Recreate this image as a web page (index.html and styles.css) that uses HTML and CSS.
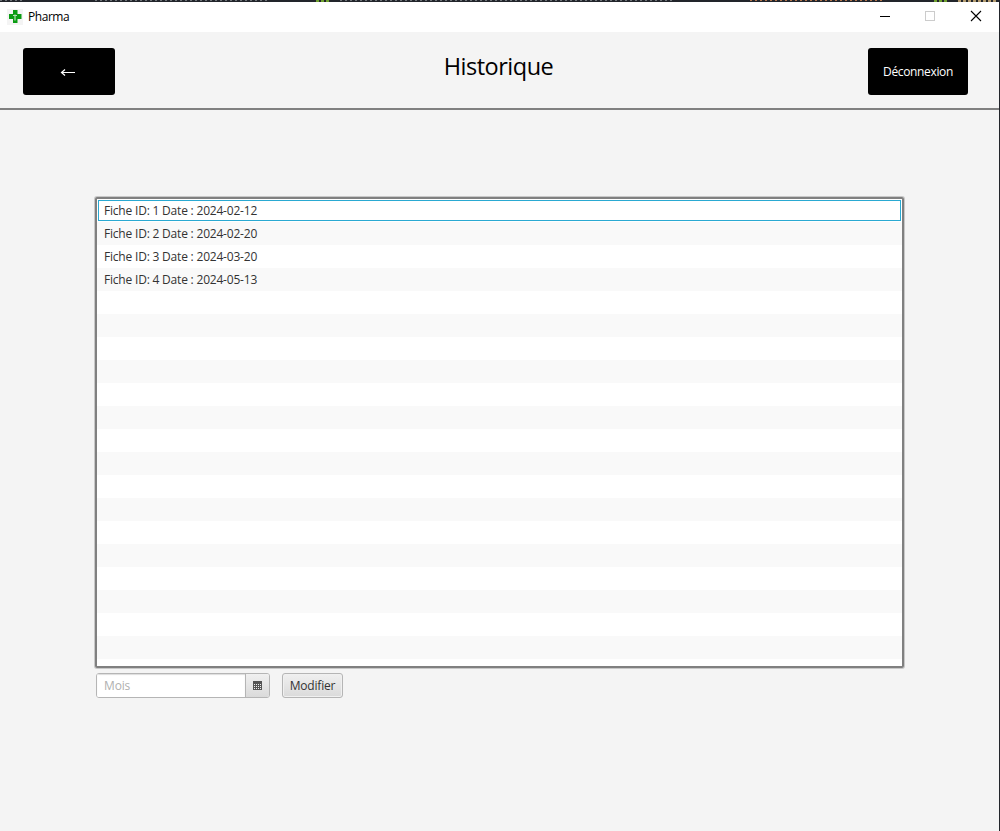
FILE: index.html
```html
<!DOCTYPE html>
<html lang="fr">
<head>
<meta charset="utf-8">
<title>Pharma</title>
<link rel="stylesheet" href="styles.css">
</head>
<body>
<div class="desktop">
<div class="backdrop"></div>
<div class="window">
  <header class="titlebar">
    <svg class="logo" width="16" height="16" viewBox="0 0 16 16"><rect width="16" height="16" fill="#f4f4f4"/><path d="M6 1h4.500v4H14.500v5H10.500v4H6v-4H2V5h4z" fill="#0a9c12"/><path d="M6 6.500h4M8 5.500v6" stroke="#b5e0b5" stroke-width="1.200" fill="none"/></svg>
    <span class="app-name">Pharma</span>
    <div class="controls">
      <svg width="46" height="30" viewBox="0 0 46 30"><path d="M18 14.5h10" stroke="#000"/></svg>
      <svg width="46" height="30" viewBox="0 0 46 30"><rect x="17.5" y="9.5" width="9" height="9" fill="none" stroke="#ccc"/></svg>
      <svg width="46" height="30" viewBox="0 0 46 30"><path d="M17 9l10 10M27 9l-10 10" stroke="#000" stroke-width="1.1"/></svg>
    </div>
  </header>
  <section class="heading">
    <button class="dark back" aria-label="Retour"><svg width="16" height="10" viewBox="0 0 16 10"><path d="M1.500 5.500H15M5 2.500L1.500 5.500L5 8.500" fill="none" stroke="#fff" stroke-width="1.200"/></svg></button>
    <h1><span>Historique</span></h1>
    <button class="dark logout"><span>Déconnexion</span></button>
  </section>
  <main>
    <ul class="list">
      <li class="focused">Fiche ID: 1 Date : 2024-02-12</li>
      <li>Fiche ID: 2 Date : 2024-02-20</li>
      <li>Fiche ID: 3 Date : 2024-03-20</li>
      <li>Fiche ID: 4 Date : 2024-05-13</li>
    </ul>
    <div class="actions">
      <div class="picker"><input placeholder="Mois"><button class="calendar" aria-label="Calendrier"><svg width="9" height="9" viewBox="0 0 9 9" shape-rendering="crispEdges"><path d="M0 0h9v9H0z" fill="#555"/><path d="M1 3.5h7M1 5.5h7M1 7.5h7" stroke="#eee" stroke-dasharray="1 1"/></svg></button></div>
      <button class="modify"><span>Modifier</span></button>
    </div>
  </main>
</div>
</div>
</body>
</html>
```
FILE: styles.css
```css
* { box-sizing: border-box; }
body { margin: 0; font: 12px "Open Sans", "Noto Sans", sans-serif; color: #333; overflow: hidden; }
button { font: inherit; padding: 0; margin: 0; }
.desktop { width: 1000px; height: 831px; background: #22252b; display: flex; flex-direction: column; }
.backdrop { height: 2px; flex: none; background:
  repeating-linear-gradient(90deg, #70757a 0 2px, transparent 2px 5px) 0 0 / 22px 1px no-repeat,
  repeating-linear-gradient(90deg, #70757a 0 2px, transparent 2px 5px) 95px 0 / 172px 1px no-repeat,
  repeating-linear-gradient(90deg, #6fa02f 0 3px, transparent 3px 5px) 316px 0 / 14px 2px no-repeat,
  repeating-linear-gradient(90deg, #70757a 0 2px, transparent 2px 5px) 340px 0 / 335px 1px no-repeat,
  repeating-linear-gradient(90deg, #b3764d 0 2px, transparent 2px 5px) 750px 0 / 134px 1px no-repeat,
  repeating-linear-gradient(90deg, #6fa02f 0 3px, transparent 3px 5px) 934px 0 / 14px 2px no-repeat,
  repeating-linear-gradient(90deg, #b39a6d 0 3px, transparent 3px 5px) 958px 0 / 38px 2px no-repeat; }
.window { width: 999px; flex: 1; background: #f4f4f4; }
.titlebar { height: 30px; background: #fff; display: flex; align-items: center; padding-left: 7px; color: #000; }
.logo { flex: none; margin-bottom: 1px; }
.app-name { margin-left: 5px; line-height: 16px; letter-spacing: -.45px; }
.controls { display: flex; margin-left: auto; margin-right: -1px; }
.heading { height: 78px; border-bottom: 2px solid #808080; display: grid; grid-template-columns: 92px 1fr 100px; padding: 16px 31px 0 23px; }
.dark { background: #000; color: #fff; border: 0; border-radius: 3px; height: 47px; }
.back { display: flex; align-items: center; justify-content: center; padding-right: 2px; }
.logout { letter-spacing: -.35px; }
h1 { margin: 0; color: #000; font-size: 23.5px; font-weight: 400; line-height: 36px; letter-spacing: -.5px; text-align: center; padding-left: 14px; }
main { padding: 87px 95px 0 95px; }
.list { margin: 0; padding: 0; list-style: none; width: 809px; height: 471px; border: 2px solid #808080; border-radius: 2px; box-shadow: 0 0 0 1px #c8c8c8; background: repeating-linear-gradient(#fff 0 23px, #f9f9f9 23px 46px); }
.list li { height: 23px; line-height: 23px; padding-left: 7px; letter-spacing: -.2px; }
.list .focused { outline: 1px solid #2aa9d2; outline-offset: -2px; }
.actions { display: flex; gap: 12px; padding: 5px 0 0 1px; }
.picker { width: 174px; height: 25px; border: 1px solid #b5b5b5; border-radius: 3px; display: flex; overflow: hidden; background: #fff; }
input { width: 148px; border: 0; padding: 0 7px; font: inherit; letter-spacing: -.15px; outline: 0; box-shadow: inset 0 1px 1px #ddd; }
input::placeholder { color: #b0b0b0; }
.calendar { flex: 1; border: 0; border-left: 1px solid #b5b5b5; background: linear-gradient(#f0f0f0, #dadada); display: flex; align-items: center; justify-content: center; }
.modify { width: 61px; height: 25px; border: 1px solid #b5b5b5; border-radius: 3px; background: linear-gradient(#f0f0f0, #dadada); color: #333; box-shadow: inset 0 0 0 1px #f0f0f0; letter-spacing: -.2px; }
```
